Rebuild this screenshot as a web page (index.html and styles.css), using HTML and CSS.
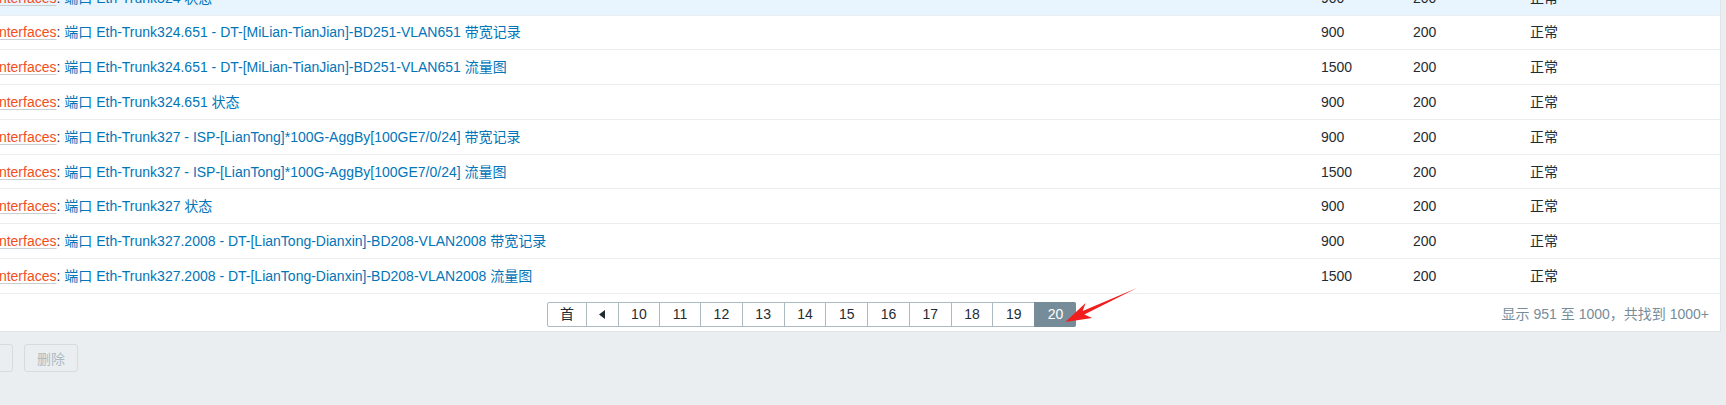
FILE: index.html
```html
<!DOCTYPE html>
<html lang="zh">
<head>
<meta charset="utf-8">
<title>Items</title>
<link rel="stylesheet" href="styles.css">
</head>
<body>
<div class="panel">
  <div class="rows">
    <div class="row hover">
      <div class="cell name"><a class="tpl">Interfaces</a>: <a class="lnk">端口 Eth-Trunk324 状态</a></div>
      <div class="cell">900</div><div class="cell">200</div><div class="cell">正常</div>
    </div>
    <div class="row">
      <div class="cell name"><a class="tpl">Interfaces</a>: <a class="lnk">端口 Eth-Trunk324.651 - DT-[MiLian-TianJian]-BD251-VLAN651 带宽记录</a></div>
      <div class="cell">900</div><div class="cell">200</div><div class="cell">正常</div>
    </div>
    <div class="row">
      <div class="cell name"><a class="tpl">Interfaces</a>: <a class="lnk">端口 Eth-Trunk324.651 - DT-[MiLian-TianJian]-BD251-VLAN651 流量图</a></div>
      <div class="cell">1500</div><div class="cell">200</div><div class="cell">正常</div>
    </div>
    <div class="row">
      <div class="cell name"><a class="tpl">Interfaces</a>: <a class="lnk">端口 Eth-Trunk324.651 状态</a></div>
      <div class="cell">900</div><div class="cell">200</div><div class="cell">正常</div>
    </div>
    <div class="row">
      <div class="cell name"><a class="tpl">Interfaces</a>: <a class="lnk">端口 Eth-Trunk327 - ISP-[LianTong]*100G-AggBy[100GE7/0/24] 带宽记录</a></div>
      <div class="cell">900</div><div class="cell">200</div><div class="cell">正常</div>
    </div>
    <div class="row">
      <div class="cell name"><a class="tpl">Interfaces</a>: <a class="lnk">端口 Eth-Trunk327 - ISP-[LianTong]*100G-AggBy[100GE7/0/24] 流量图</a></div>
      <div class="cell">1500</div><div class="cell">200</div><div class="cell">正常</div>
    </div>
    <div class="row">
      <div class="cell name"><a class="tpl">Interfaces</a>: <a class="lnk">端口 Eth-Trunk327 状态</a></div>
      <div class="cell">900</div><div class="cell">200</div><div class="cell">正常</div>
    </div>
    <div class="row">
      <div class="cell name"><a class="tpl">Interfaces</a>: <a class="lnk">端口 Eth-Trunk327.2008 - DT-[LianTong-Dianxin]-BD208-VLAN2008 带宽记录</a></div>
      <div class="cell">900</div><div class="cell">200</div><div class="cell">正常</div>
    </div>
    <div class="row">
      <div class="cell name"><a class="tpl">Interfaces</a>: <a class="lnk">端口 Eth-Trunk327.2008 - DT-[LianTong-Dianxin]-BD208-VLAN2008 流量图</a></div>
      <div class="cell">1500</div><div class="cell">200</div><div class="cell">正常</div>
    </div>
  </div>
  <div class="footer">
    <div class="paging">
      <a class="pg">首</a>
      <a class="pg arrow"><svg width="6" height="9" viewBox="0 0 6 9"><polygon points="6,0 6,9 0,4.5" fill="#1f2c33"/></svg></a>
      <a class="pg">10</a>
      <a class="pg">11</a>
      <a class="pg">12</a>
      <a class="pg">13</a>
      <a class="pg">14</a>
      <a class="pg">15</a>
      <a class="pg">16</a>
      <a class="pg">17</a>
      <a class="pg">18</a>
      <a class="pg">19</a>
      <a class="pg active">20</a>
    </div>
    <div class="stats">显示 951 至 1000，共找到 1000+</div>
  </div>
</div>
<div class="actions">
  <button class="btn" disabled>批量更新</button>
  <button class="btn" disabled>删除</button>
</div>
<svg class="annot" width="90" height="50" viewBox="1058 282 90 50">
  <polygon points="1137,288 1082.7,310.9 1085.6,302.9 1065.3,322 1092.2,318 1084.3,314.5" fill="#f01e1e"/>
</svg>
</body>
</html>
```

FILE: styles.css
```css
html, body {
  margin: 0;
  padding: 0;
}
body {
  background: #ebeef0;
  font-family: "Liberation Sans", "Noto Sans CJK SC", sans-serif;
  font-size: 14px;
  color: #1f2c33;
  overflow: hidden;
  position: relative;
  width: 1726px;
  height: 405px;
}
.panel {
  margin-top: -19.3px;
  margin-left: -10px;
  width: 1731px;
  box-sizing: border-box;
  background: #fff;
  border-right: 1px solid #dfe4e7;
  border-bottom: 1px solid #dfe4e7;
}
.row {
  display: grid;
  grid-template-columns: 1326px 92px 117px 1fr;
  height: 34.8px;
  box-sizing: border-box;
  border-bottom: 1px solid #ebeef0;
  align-items: center;
}
.row.hover {
  background: #e8f5ff;
}
.cell {
  padding: 0 5px;
  line-height: 16px;
  white-space: nowrap;
}
.tpl {
  color: #f24f1d;
  text-decoration: underline;
  text-decoration-color: #c9ced3;
  text-underline-offset: 2px;
}
.lnk {
  color: #0275b8;
}
.footer {
  display: flex;
  align-items: center;
  padding: 8px 11px 4.5px 0;
}
.paging {
  margin-left: 557px;
  display: flex;
  height: 25px;
  box-sizing: border-box;
  border: 1px solid #acbbc2;
  border-radius: 2px;
}
.pg {
  display: flex;
  align-items: center;
  justify-content: center;
  padding: 0 12.6px 0 12.6px;
  border-left: 1px solid #acbbc2;
  color: #1f2c33;
  line-height: 16px;
}
.pg:first-child {
  border-left: none;
  padding: 0 12px 0 12px;
}
.pg.arrow {
  padding: 0 12.5px 0 12px;
}
.pg.active {
  background: #768d99;
  border-left-color: #768d99;
  color: #fff;
  margin: -1px -1px -1px 0;
  border-radius: 0 2px 2px 0;
  padding: 0 13.1px 0 12.6px;
}
.stats {
  margin-left: auto;
  color: #768d99;
  line-height: 16px;
}
.actions {
  display: flex;
  gap: 11.5px;
  margin-top: 12px;
  margin-left: -69.4px;
}
.btn {
  height: 27.5px;
  padding: 0 12px;
  font-family: "Liberation Sans", "Noto Sans CJK SC", sans-serif;
  font-size: 14px;
  background: #ebeef0;
  border: 1px solid #d5dbdf;
  border-radius: 3px;
  color: #acbbc2;
}
.annot {
  position: absolute;
  left: 1058px;
  top: 282px;
}
```
